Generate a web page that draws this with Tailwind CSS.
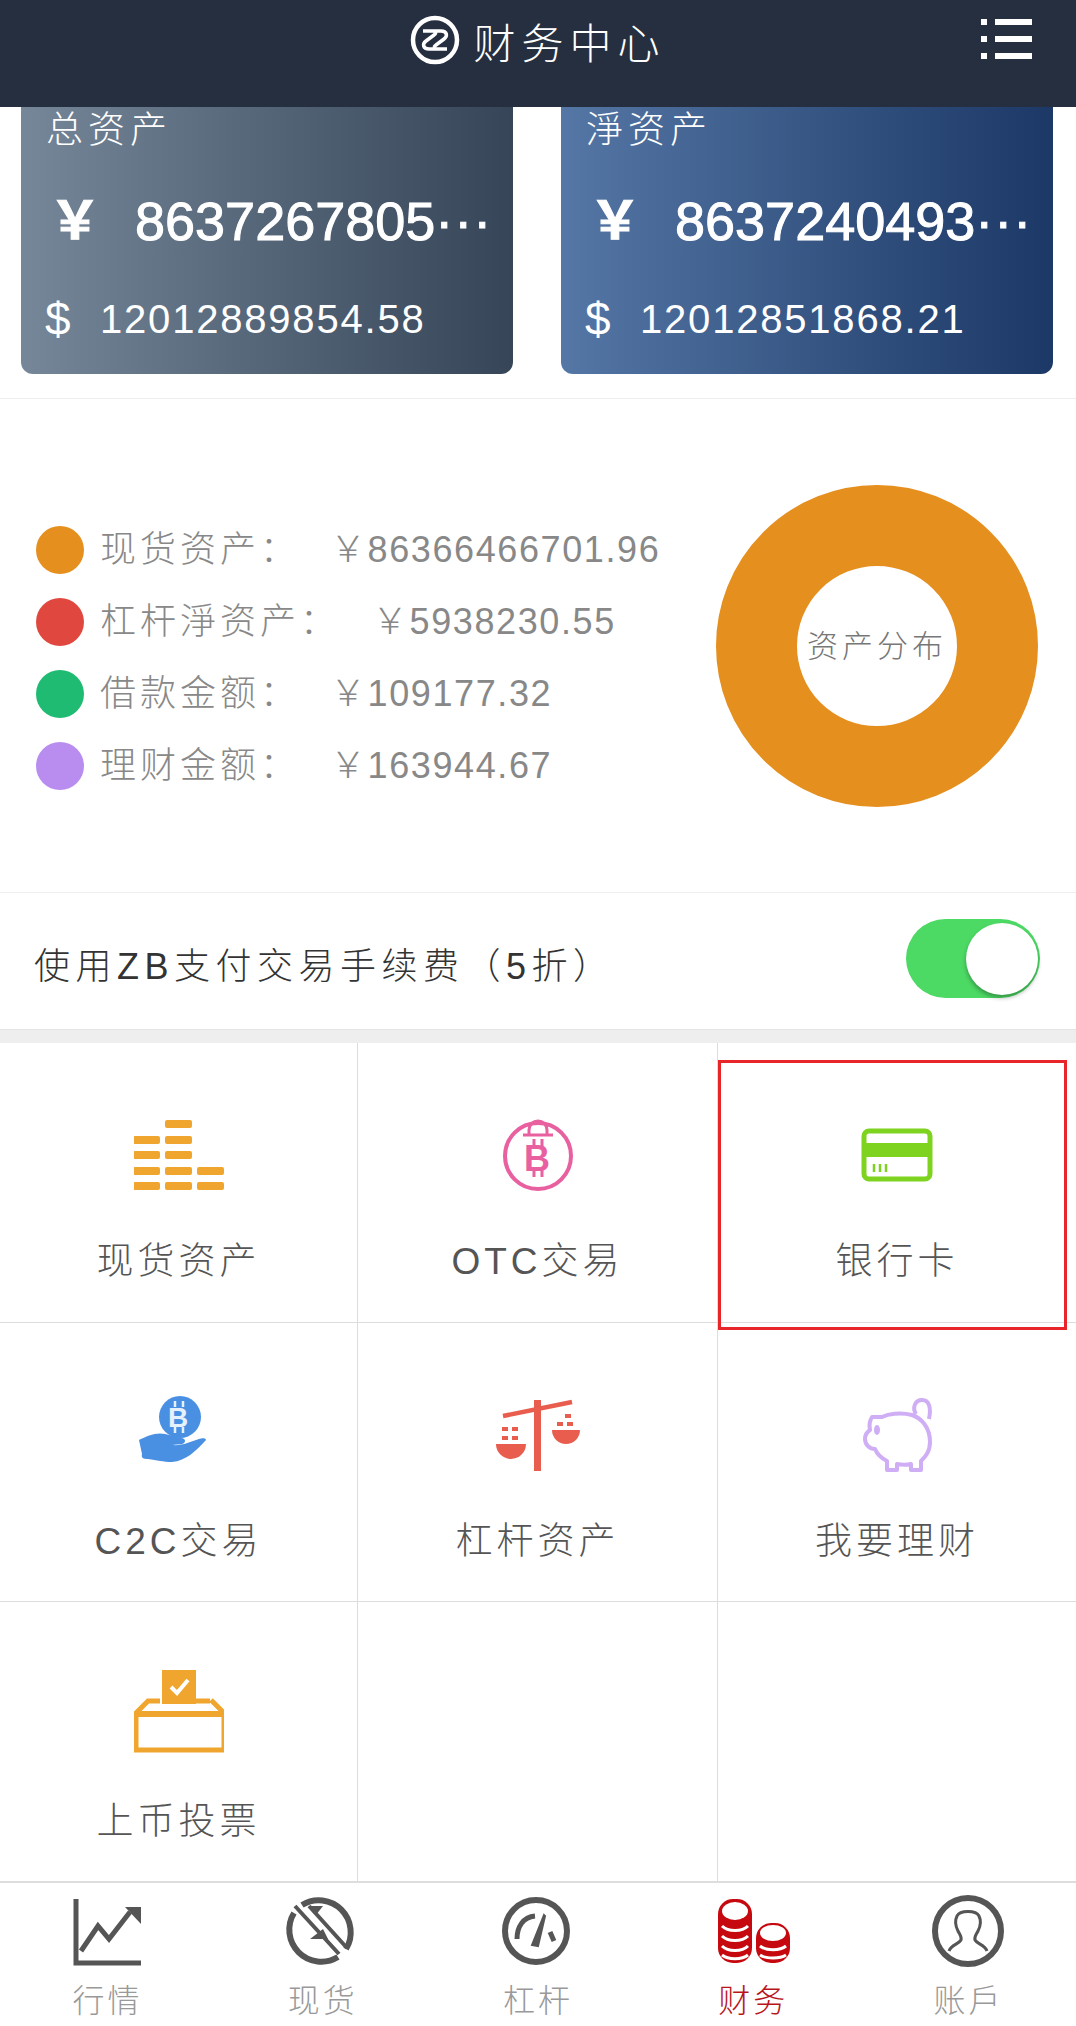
<!DOCTYPE html>
<html lang="zh-CN">
<head>
    <meta charset="UTF-8">
    <meta name="viewport" content="width=device-width, initial-scale=1.0">
    <title>财务中心</title>
    <script src="https://cdn.jsdelivr.net/npm/@tailwindcss/browser@4"></script>
</head>

<body class="bg-white w-[1076px] h-[2026px] overflow-hidden font-['Liberation_Sans','Noto_Sans_CJK_SC',sans-serif] font-light">
    <!-- 顶部标题 -->
    <header class="relative h-[107px] bg-[#252f40] flex justify-center text-white">
        <div class="flex items-start pt-[15px]">
            <svg class="w-[50px] h-[50px] mr-[13px]" viewBox="0 0 50 50" fill="none" stroke="#fff">
                <circle cx="25" cy="25" r="22" stroke-width="4.500"/>
                <path d="M13 16h18c6 0 7 5 3 8l-8 6c-3 2-1 4 1 4h10M37 34H19c-6 0-7-5-3-8l8-6c3-2 1-4-1-4H13" stroke-width="3.500"/>
            </svg>
            <h1 class="text-[42px] leading-[60px] tracking-[6px]">财务中心</h1>
        </div>
        <svg class="absolute left-[981px] top-[19px] w-[51px] h-[40px]" viewBox="0 0 51 40" fill="#fff">
            <rect x="0" y="0" width="6" height="6"/><rect x="14" y="0" width="37" height="6"/>
            <rect x="0" y="17" width="6" height="6"/><rect x="14" y="17" width="37" height="6"/>
            <rect x="0" y="34" width="6" height="6"/><rect x="14" y="34" width="37" height="6"/>
        </svg>
    </header>

    <!-- 资产卡片 -->
    <section class="flex justify-between pl-[21px] pr-[23px] pb-[24px] border-b border-[#eeeeee]">
        <div class="w-[492px] h-[267px] rounded-b-[12px] bg-linear-to-r from-[#76879a] to-[#364558] text-white pt-[4px]">
            <div class="pl-[25px] text-[37px] leading-[40px] tracking-[5px]">总资产</div>
            <div class="flex items-center mt-[40px] h-[60px] pl-[28px] text-[54px] [-webkit-text-stroke:1px_white]">
                <span class="w-[86px] text-[52px] font-bold">￥</span><span>8637267805<span class="tracking-[1px]">···</span></span>
            </div>
            <div class="flex items-center mt-[46px] h-[44px] pl-[24px] text-[40px] tracking-[1.800px]">
                <span class="w-[55px] text-[46px]">$</span><span>12012889854.58</span>
            </div>
        </div>
        <div class="w-[492px] h-[267px] rounded-b-[12px] bg-linear-to-r from-[#5577a5] to-[#1c3866] text-white pt-[4px]">
            <div class="pl-[25px] text-[37px] leading-[40px] tracking-[5px]">淨资产</div>
            <div class="flex items-center mt-[40px] h-[60px] pl-[28px] text-[54px] [-webkit-text-stroke:1px_white]">
                <span class="w-[86px] text-[52px] font-bold">￥</span><span>8637240493<span class="tracking-[1px]">···</span></span>
            </div>
            <div class="flex items-center mt-[46px] h-[44px] pl-[24px] text-[40px] tracking-[1.800px]">
                <span class="w-[55px] text-[46px]">$</span><span>12012851868.21</span>
            </div>
        </div>
    </section>

    <!-- 资产分布 -->
    <section class="h-[494px] flex items-center justify-between pl-[36px] pr-[38px] border-b border-[#eeeeee]">
        <div class="flex flex-col gap-[24px] mt-[24px] text-[#888888]">
            <div class="flex items-center h-[48px]">
                <span class="w-[48px] h-[48px] rounded-full bg-[#e58f1f] mr-[16px]"></span>
                <span class="text-[36px] tracking-[4px]">现货资产：</span>
                <span class="ml-[30px] text-[36px] tracking-[1.600px]">￥86366466701.96</span>
            </div>
            <div class="flex items-center h-[48px]">
                <span class="w-[48px] h-[48px] rounded-full bg-[#e0483f] mr-[16px]"></span>
                <span class="text-[36px] tracking-[4px]">杠杆淨资产：</span>
                <span class="ml-[32px] text-[36px] tracking-[1.600px]">￥5938230.55</span>
            </div>
            <div class="flex items-center h-[48px]">
                <span class="w-[48px] h-[48px] rounded-full bg-[#1fbb72] mr-[16px]"></span>
                <span class="text-[36px] tracking-[4px]">借款金额：</span>
                <span class="ml-[30px] text-[36px] tracking-[1.600px]">￥109177.32</span>
            </div>
            <div class="flex items-center h-[48px]">
                <span class="w-[48px] h-[48px] rounded-full bg-[#b98cf0] mr-[16px]"></span>
                <span class="text-[36px] tracking-[4px]">理财金额：</span>
                <span class="ml-[30px] text-[36px] tracking-[1.600px]">￥163944.67</span>
            </div>
        </div>
        <div class="w-[322px] h-[322px] rounded-full border-[81px] border-[#e58f1f] flex items-center justify-center shrink-0 pt-[3px]">
            <span class="text-[31px] tracking-[4px] text-[#777777] whitespace-nowrap">资产分布</span>
        </div>
    </section>

    <!-- 手续费开关 -->
    <section class="h-[136px] flex items-center justify-between pl-[34px] pr-[36px]">
        <span class="mt-[12px] text-[36px] tracking-[5.500px] text-[#333333]">使用ZB支付交易手续费（5折）</span>
        <div class="relative w-[134px] h-[79px] mb-[5px] rounded-full bg-[#4cd964]">
            <div class="absolute right-[2px] top-[4px] w-[72px] h-[72px] rounded-full bg-white shadow-[0_3px_4px_rgba(0,0,0,0.3)]"></div>
        </div>
    </section>
    <div class="h-[14px] bg-[#eeeeee] border-t border-[#e4e4e4]"></div>

    <!-- 功能入口 -->
    <section class="grid grid-cols-[358px_360px_358px] grid-rows-[280px_279px_279px] text-[#555555] text-[37px] leading-[40px] tracking-[4px] text-center">
        <div class="border-b border-r border-[#dddddd] pt-[68px] flex flex-col items-center">
            <svg class="w-[90px] h-[90px]" viewBox="2 0 90 90" fill="#f0a62e">
                <rect x="33" y="9" width="27" height="8" rx="2"/>
                <rect x="1" y="25" width="27" height="8" rx="2"/><rect x="33" y="25" width="27" height="8" rx="2"/>
                <rect x="1" y="40" width="27" height="8" rx="2"/><rect x="33" y="40" width="27" height="8" rx="2"/>
                <rect x="1" y="56" width="27" height="8" rx="2"/><rect x="33" y="56" width="27" height="8" rx="2"/><rect x="65" y="56" width="27" height="8" rx="2"/>
                <rect x="1" y="71" width="27" height="8" rx="2"/><rect x="33" y="71" width="27" height="8" rx="2"/><rect x="65" y="71" width="27" height="8" rx="2"/>
            </svg>
            <span class="mt-[41px]">现货资产</span>
        </div>
        <div class="border-b border-r border-[#dddddd] pt-[68px] flex flex-col items-center">
            <svg class="w-[90px] h-[90px]" viewBox="0 0 90 90" fill="none" stroke="#e8609f">
                <circle cx="45" cy="45" r="33" stroke-width="4"/>
                <path d="M36 24v-5a9 9 0 0 1 18 0v5M30 24h30" stroke-width="3"/>
                <path d="M41 28v8M49 28v8M41 58v8M49 58v8" stroke-width="3"/>
                <text x="46" y="60" text-anchor="middle" fill="#e8609f" stroke="none" font-size="36" font-weight="700" font-family="Liberation Sans">B</text>
            </svg>
            <span class="mt-[41px]">OTC交易</span>
        </div>
        <div class="relative border-b border-[#dddddd] pt-[68px] flex flex-col items-center">
            <svg class="w-[90px] h-[90px]" viewBox="0 0 90 90">
                <rect x="12" y="20" width="66" height="48" rx="5" fill="#fff" stroke="#7ed321" stroke-width="5"/>
                <rect x="12" y="32" width="66" height="14" fill="#7ed321"/>
                <path d="M22 53v8M28 53v8M34 53v8" stroke="#7ed321" stroke-width="2.500"/>
            </svg>
            <span class="mt-[41px]">银行卡</span>
            <div class="absolute left-0 top-[17px] w-[349px] h-[270px] border-[3px] border-[#e8262a] z-10"></div>
        </div>

        <div class="border-b border-r border-[#dddddd] pt-[68px] flex flex-col items-center">
            <svg class="w-[90px] h-[90px]" viewBox="0 0 90 90">
                <circle cx="46" cy="26" r="21" fill="#4a90e2"/>
                <path d="M41 10v6M49 10v6M41 36v6M49 36v6" stroke="#e6f1fc" stroke-width="2.500"/>
                <text x="46" y="36" text-anchor="middle" fill="#e6f1fc" font-size="28" font-weight="700" font-family="Liberation Sans">B</text>
                <path d="M5 49c8-4 17-8 26-6 6 1 11 3 17 4 4 1 4 5 0 6l-10 1c10 1 18-3 27-6 3-1 7-1 7 1-9 10-20 21-34 22-9 0-15-2-24-3-5 0-7-1-6-5z" fill="#4a90e2"/>
            </svg>
            <span class="mt-[41px]">C2C交易</span>
        </div>
        <div class="border-b border-r border-[#dddddd] pt-[68px] flex flex-col items-center">
            <svg class="w-[90px] h-[90px]" viewBox="0 0 90 90" fill="#e85d4e">
                <rect x="41" y="9" width="7" height="71"/>
                <path d="M10 25 79 11" stroke="#e85d4e" stroke-width="4.500" fill="none"/>
                <path d="M3 53h30a15 15 0 0 1-30 0z"/>
                <path d="M59 39h28a14 14 0 0 1-28 0z"/>
                <rect x="9" y="36" width="6" height="4"/><rect x="19" y="36" width="6" height="4"/>
                <rect x="9" y="45" width="6" height="4"/><rect x="19" y="45" width="6" height="4"/>
                <rect x="72" y="23" width="6" height="4"/>
                <rect x="64" y="31" width="6" height="4"/><rect x="74" y="31" width="6" height="4"/>
            </svg>
            <span class="mt-[41px]">杠杆资产</span>
        </div>
        <div class="border-b border-[#dddddd] pt-[68px] flex flex-col items-center">
            <svg class="w-[90px] h-[90px]" viewBox="0 0 90 90" fill="none" stroke="#cfaef5" stroke-width="4" stroke-linejoin="round">
                <path d="M30 26c6-3 18-5 30-2 9 3 18 12 18 27 0 10-5 15-9 19v9h-10v-6c-4 1-9 1-14 0v6H35v-9c-6-3-10-7-12-12-5 0-10-4-10-10 0-4 2-7 5-9-1-5 0-10 2-13 4 0 8 0 10 0z"/>
                <path d="M64 23c-4-6-1-14 6-14 8 0 9 9 7 19"/>
                <ellipse cx="25" cy="39" rx="3" ry="5" fill="#cfaef5" stroke="none"/>
            </svg>
            <span class="mt-[41px]">我要理财</span>
        </div>

        <div class="border-r border-[#dddddd] pt-[68px] flex flex-col items-center">
            <svg class="w-[90px] h-[90px]" viewBox="2 0 90 90" fill="none">
                <path d="M16 31h12M78 31H62M17 30 4 43v37h88V43L79 30" stroke="#f0a62e" stroke-width="5"/>
                <path d="M4 44h88" stroke="#f0a62e" stroke-width="6"/>
                <rect x="30" y="0" width="34" height="34" fill="#f0a62e"/>
                <path d="M39 17l6 6 11-13" stroke="#fff" stroke-width="4"/>
            </svg>
            <span class="mt-[42px]">上币投票</span>
        </div>
        <div class="border-r border-[#dddddd]"></div>
        <div></div>
    </section>

    <!-- 底部导航 -->
    <nav class="grid grid-cols-5 border-t-2 border-[#dddddd] pt-[8px] text-[32px] leading-[40px] tracking-[3px] text-center text-[#999999]">
        <div class="flex flex-col items-center">
            <svg class="w-[80px] h-[80px]" viewBox="1 0 80 80" fill="none" stroke="#555555">
                <path d="M9 8v64h65" stroke-width="5"/>
                <path d="M14 60l17-25 11 13 21-27" stroke-width="5"/>
                <path d="M58 16h16v17z" fill="#555555" stroke="none"/>
            </svg>
            <span class="mt-[10px]">行情</span>
        </div>
        <div class="flex flex-col items-center">
            <svg class="w-[80px] h-[80px]" viewBox="3 0 80 80" fill="none" stroke="#555555">
                <path d="M22 14a32 32 0 0 1 44 44M58 66a32 32 0 0 1-44-44" stroke-width="6"/>
                <path d="M15 15l44 48M29 15l38 42" stroke-width="4"/>
                <path d="M30 48h18l-5-10z" fill="#555555" stroke="none"/>
                <path d="M29 15h14l-7 9z" fill="#555555" stroke="none"/>
            </svg>
            <span class="mt-[10px]">现货</span>
        </div>
        <div class="flex flex-col items-center">
            <svg class="w-[80px] h-[80px]" viewBox="2 0 80 80" fill="none" stroke="#555555">
                <circle cx="40" cy="40" r="31" stroke-width="6"/>
                <path d="M21 48c0-12 6-22 18-23" stroke-width="5"/>
                <path d="M36 54l12-30 1 1-7 30z" fill="#555555" stroke-width="2"/>
                <path d="M54 41l4 9" stroke-width="5"/>
            </svg>
            <span class="mt-[10px]">杠杆</span>
        </div>
        <div class="flex flex-col items-center">
            <svg class="w-[80px] h-[80px]" viewBox="-3 0 80 80" fill="none">
                <rect x="2" y="8" width="34" height="64" rx="15" fill="#c5090f"/>
                <rect x="40" y="32" width="34" height="40" rx="15" fill="#c5090f"/>
                <ellipse cx="19" cy="20" rx="13" ry="9" fill="#fff"/>
                <ellipse cx="57" cy="42" rx="13" ry="8" fill="#fff"/>
                <path d="M6 35c6 6 20 6 26 0M6 45c6 6 20 6 26 0M6 55c6 6 20 6 26 0M6 64c6 5 20 5 26 0M44 55c6 5 20 5 26 0M44 64c6 4 20 4 26 0" stroke="#fff" stroke-width="3"/>
            </svg>
            <span class="mt-[10px] text-[#b8141a]">财务</span>
        </div>
        <div class="flex flex-col items-center">
            <svg class="w-[80px] h-[80px]" viewBox="0 0 80 80" fill="none" stroke="#555555">
                <circle cx="40" cy="40" r="33" stroke-width="6"/>
                <path d="M21 60c2-6 10-7 12-11 1-3-1-5-3-9-3-6-3-11-1-15 3-6 19-6 22 0 2 4 2 9-1 15-2 4-4 6-3 9 2 4 10 5 12 11" stroke-width="3"/>
            </svg>
            <span class="mt-[10px]">账戶</span>
        </div>
    </nav>
</body>
</html>
